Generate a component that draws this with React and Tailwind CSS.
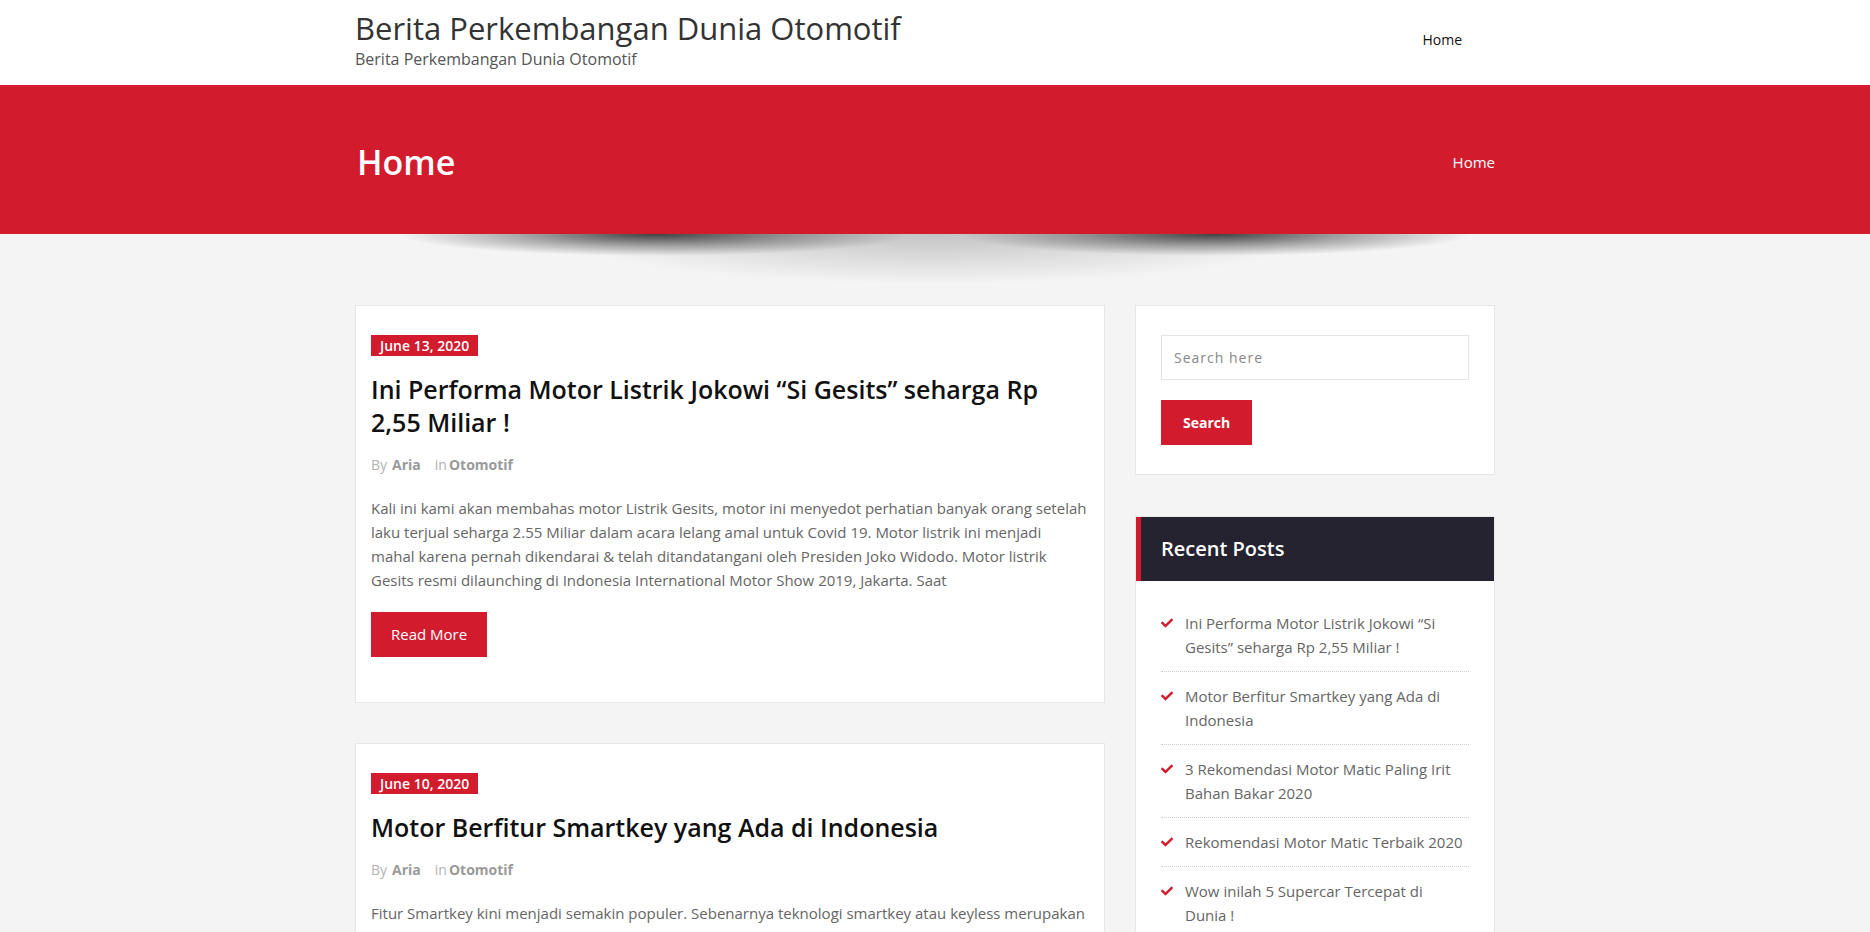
import React from "react";
import { FaCheck } from "react-icons/fa";

const RED = "bg-[#d31b2e]";

const recent = [
  "Ini Performa Motor Listrik Jokowi “Si Gesits” seharga Rp 2,55 Miliar !",
  "Motor Berfitur Smartkey yang Ada di Indonesia",
  "3 Rekomendasi Motor Matic Paling Irit Bahan Bakar 2020",
  "Rekomendasi Motor Matic Terbaik 2020",
  "Wow inilah 5 Supercar Tercepat di Dunia !",
];

const posts = [
  {
    date: "June 13, 2020",
    title: "Ini Performa Motor Listrik Jokowi “Si Gesits” seharga Rp 2,55 Miliar !",
    excerpt:
      "Kali ini kami akan membahas motor Listrik Gesits, motor ini menyedot perhatian banyak orang setelah laku terjual seharga 2.55 Miliar dalam acara lelang amal untuk Covid 19. Motor listrik ini menjadi mahal karena pernah dikendarai & telah ditandatangani oleh Presiden Joko Widodo. Motor listrik Gesits resmi dilaunching di Indonesia International Motor Show 2019, Jakarta. Saat",
  },
  {
    date: "June 10, 2020",
    title: "Motor Berfitur Smartkey yang Ada di Indonesia",
    excerpt:
      "Fitur Smartkey kini menjadi semakin populer. Sebenarnya teknologi smartkey atau keyless merupakan teknologi yang sudah cukup lama digunakan pada mobil, namun kini mulai banyak diterapkan juga pada sepeda motor di Indonesia. Berikut beberapa motor yang sudah dilengkapi fitur smartkey",
  },
];

function PostCard({ post }) {
  return (
    <article className="bg-white border border-[#e6e6e6] px-[15px] pt-[29px] pb-[45px]">
      <span className={`block w-fit ${RED} text-white text-[14px] font-semibold leading-[21px] px-[9px]`}>
        {post.date}
      </span>
      <h2 className="mt-[17px] text-[25px] leading-[33px] font-semibold text-[#111]">{post.title}</h2>
      <div className="mt-[16px] flex items-center text-[14px] leading-[20px]">
        <span className="text-[#b3b3b3]">By</span>
        <span className="ml-[5px] font-bold text-[#9a9a9a]">Aria</span>
        <span className="ml-[14px] text-[#b3b3b3]">in</span>
        <span className="ml-[2px] font-bold text-[#9a9a9a]">Otomotif</span>
      </div>
      <p className="mt-[21px] mr-[1px] text-[15px] leading-[24px] text-[#666]">{post.excerpt}</p>
      <a className={`mt-[20px] block w-fit ${RED} text-white text-[15px] leading-[25px] px-[20px] py-[10px]`}>
        Read More
      </a>
    </article>
  );
}

function BannerShadow() {
  return (
    <div className="h-[50px] flex justify-center overflow-hidden">
      <svg width="1100" height="50" viewBox="0 0 1100 50">
        <defs>
          <radialGradient id="gc" cx="50%" cy="50%" r="50%">
            <stop offset="0" stopColor="#000" stopOpacity="0.2" />
            <stop offset="1" stopColor="#000" stopOpacity="0" />
          </radialGradient>
          <radialGradient id="gs" cx="50%" cy="50%" r="50%">
            <stop offset="0" stopColor="#000" stopOpacity="0.72" />
            <stop offset="0.55" stopColor="#000" stopOpacity="0.3" />
            <stop offset="1" stopColor="#000" stopOpacity="0" />
          </radialGradient>
        </defs>
        <ellipse cx="550" cy="0" rx="380" ry="50" fill="url(#gc)" />
        <ellipse cx="270" cy="0" rx="255" ry="22" fill="url(#gs)" />
        <ellipse cx="830" cy="0" rx="255" ry="22" fill="url(#gs)" />
      </svg>
    </div>
  );
}

export default function App() {
  return (
    <div className="min-h-screen bg-[#f4f4f4] font-['Open_Sans',sans-serif] pb-[60px]">
      <header className="bg-white h-[85px]">
        <div className="ml-[355px] w-[1140px] flex justify-between items-start">
          <div className="pt-[10px]">
            <h1 className="text-[31px] leading-[36px] font-medium text-[#333]">Berita Perkembangan Dunia Otomotif</h1>
            <p className="mt-[2px] text-[16px] leading-[22px] text-[#555]">Berita Perkembangan Dunia Otomotif</p>
          </div>
          <nav className="pt-[27px] mr-[33px]">
            <a className="text-[14px] leading-[20px] text-[#111]">Home</a>
          </nav>
        </div>
      </header>

      <section className={`${RED} h-[149px]`}>
        <div className="ml-[355px] w-[1140px] h-full flex items-center justify-between pt-[5px]">
          <h2 className="pl-[2px] text-[34px] leading-[40px] font-semibold text-white">Home</h2>
          <span className="text-[15px] leading-[20px] text-white">Home</span>
        </div>
      </section>

      <BannerShadow />

      <main className="ml-[355px] w-[1140px] pt-[21px] flex gap-[30px] items-start">
        <div className="w-[750px] flex flex-col gap-[40px]">
          {posts.map((p) => (
            <PostCard key={p.date} post={p} />
          ))}
        </div>

        <aside className="w-[360px] flex flex-col gap-[41px]">
          <div className="bg-white border border-[#e6e6e6] px-[25px] pt-[29px] pb-[29px]">
            <input
              placeholder="Search here"
              className="block w-full h-[45px] border border-[#e6e6e6] px-[12px] text-[14px] tracking-[1px] text-[#555] placeholder:text-[#888] outline-none"
            />
            <button className={`mt-[20px] block ${RED} text-white text-[14px] font-bold h-[45px] px-[22px]`}>
              Search
            </button>
          </div>

          <div className="bg-white border border-[#e6e6e6]">
            <div className="h-[64px] bg-[#24232f] border-l-[5px] border-[#d31b2e] flex items-center pl-[20px]">
              <h3 className="text-[20px] font-semibold text-white">Recent Posts</h3>
            </div>
            <ul className="px-[25px] pt-[18px] pb-[20px]">
              {recent.map((t) => (
                <li key={t} className="flex gap-[12px] py-3 border-b border-dotted border-[#cfcfcf]">
                  <span className="h-[24px] flex items-center shrink-0">
                    <FaCheck className="text-[#d31b2e] w-[12px] h-[12px]" />
                  </span>
                  <span className="pr-[3px] text-[15px] leading-[24px] text-[#666]">{t}</span>
                </li>
              ))}
            </ul>
          </div>
        </aside>
      </main>
    </div>
  );
}
